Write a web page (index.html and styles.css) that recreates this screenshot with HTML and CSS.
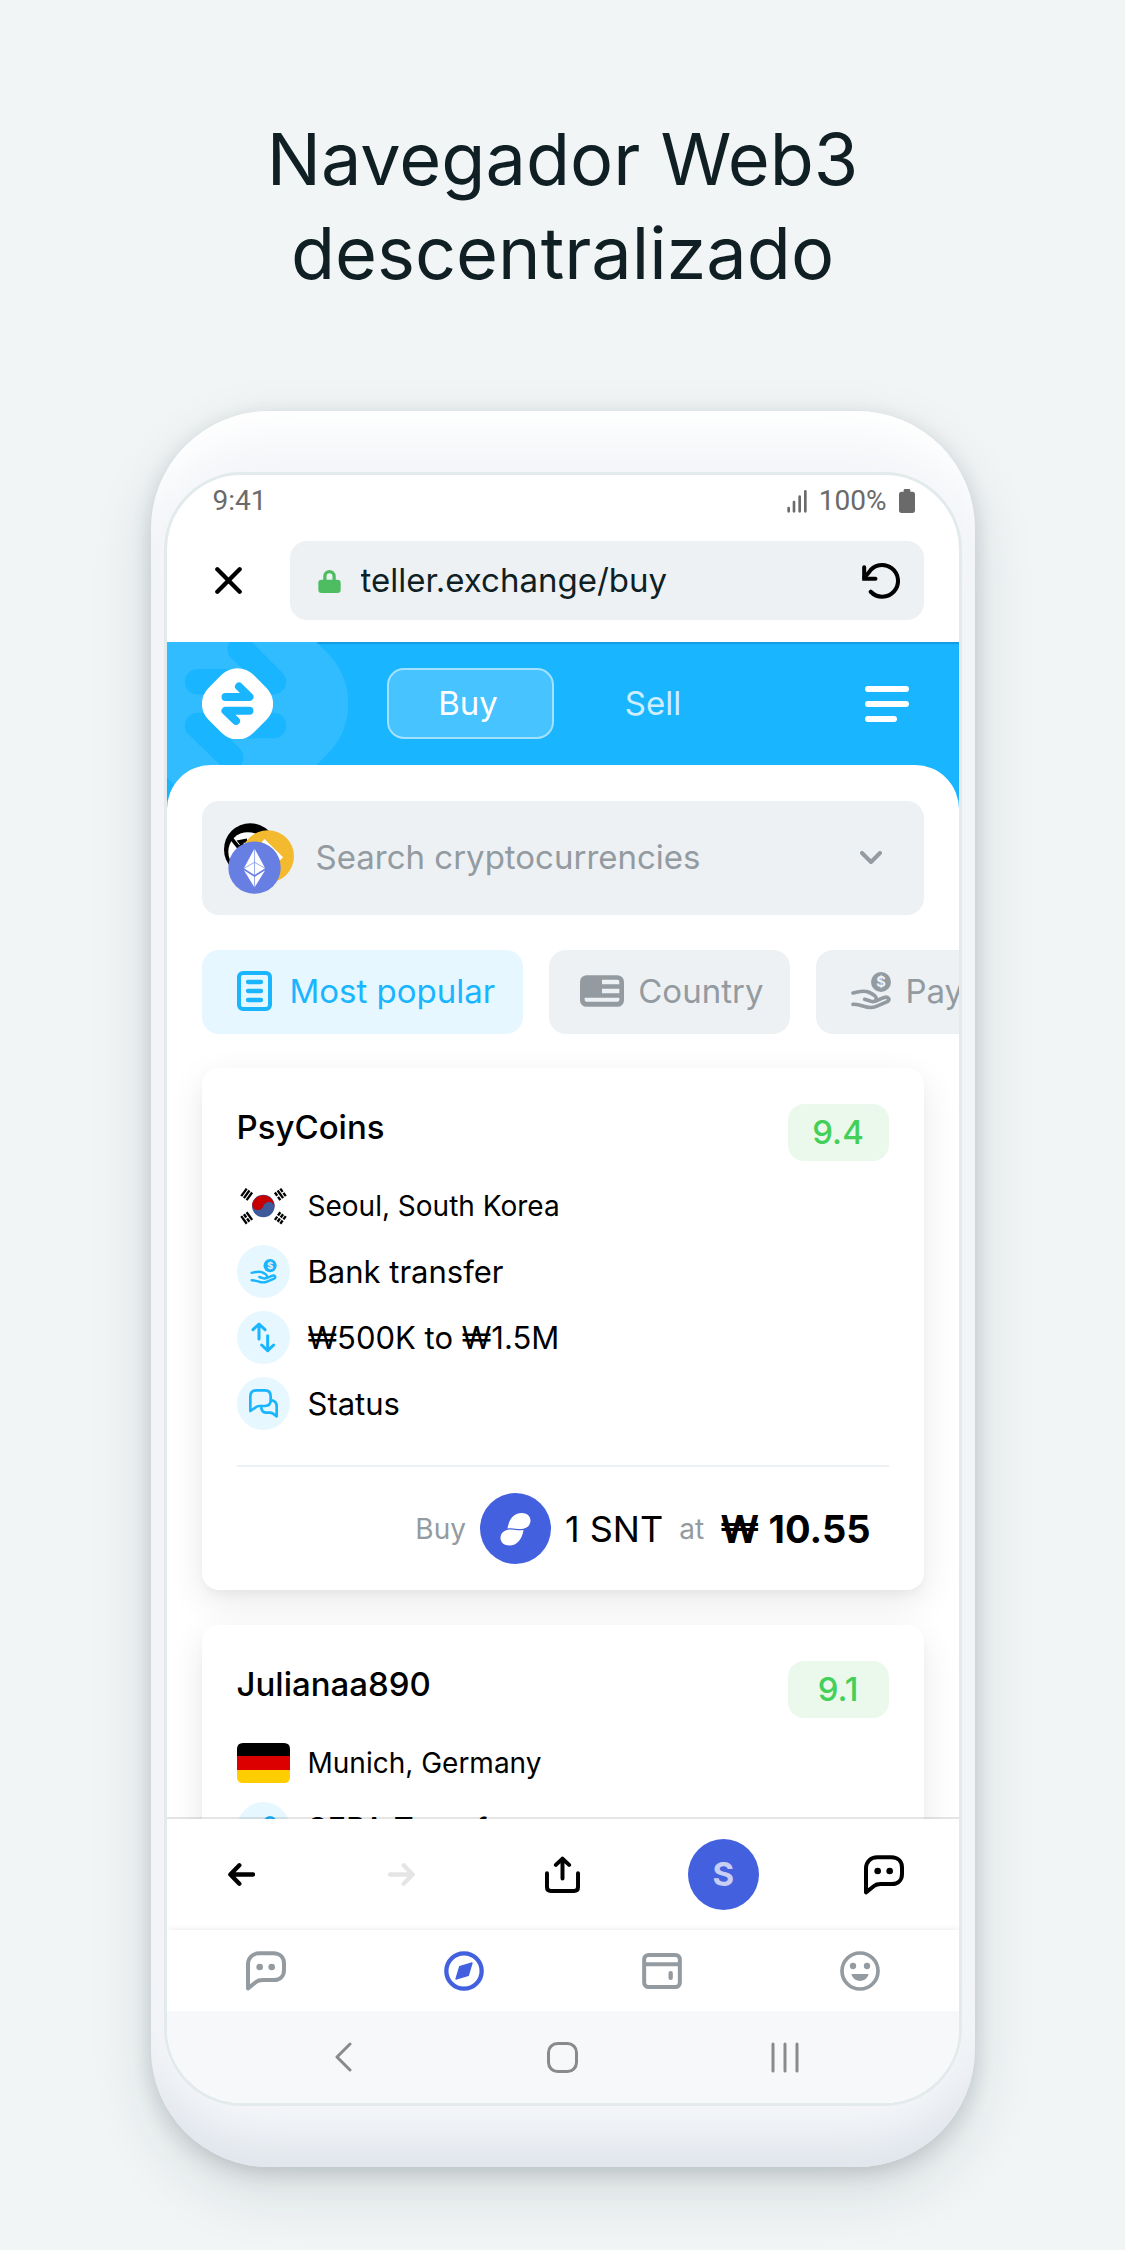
FILE: index.html
```html
<!DOCTYPE html>
<html lang="es">
<head>
<meta charset="utf-8">
<meta name="viewport" content="width=device-width, initial-scale=1">
<title>Navegador Web3 descentralizado</title>
<link rel="stylesheet" href="styles.css">
</head>
<body>
<svg class="sprite" aria-hidden="true">
  <symbol id="hand" viewBox="0 0 120 114">
    <circle cx="90" cy="30" r="30" fill="currentColor"/>
    <g fill="none" stroke="currentColor" stroke-width="11" stroke-linecap="round" stroke-linejoin="round">
      <path d="M6 63C22 60 36 54 52 60C64 65 76 72 76 80C76 88 68 90 60 88L41 82"/>
      <path d="M74 87L98 77C112 72 119 83 109 89L76 103C62 109 50 107 38 103C26 99 18 96 6 97"/>
    </g>
    <text class="coin-sign" x="90" y="45" text-anchor="middle">$</text>
  </symbol>
  <symbol id="chat" viewBox="0 0 120 120">
    <path d="M6 112V40C6 20 20 7 40 7H82C102 7 114 20 114 38V57C114 75 102 87 84 87H50C42 87 36 88 30 93Z" fill="none" stroke="currentColor" stroke-width="12" stroke-linejoin="round"/>
    <circle cx="41" cy="48" r="10" fill="currentColor"/><circle cx="77" cy="48" r="10" fill="currentColor"/>
  </symbol>
  <symbol id="arrow-left" viewBox="0 0 81 69">
    <path d="M75 34.500H8M34 7L7 34.500L34 62" fill="none" stroke="currentColor" stroke-width="13" stroke-linecap="round" stroke-linejoin="round"/>
  </symbol>
</svg>

<main class="promo">
  <h1 class="headline">Navegador Web3<br>descentralizado</h1>

  <div class="phone">
    <div class="screen">
      <div class="status-bar">
        <span>9:41</span>
        <span class="status-right">
          <svg width="20" height="24" viewBox="0 0 60 72" aria-hidden="true"><path d="M5 57V67M21 39V67M38 23V67M55 7V67" stroke="#6a6a6a" stroke-width="8" stroke-linecap="round"/></svg>
          <span>100%</span>
          <svg width="16" height="24" viewBox="0 0 48 72" aria-hidden="true"><path d="M14 8V4Q14 0 18 0H30Q34 0 34 4V8H40Q48 8 48 16V64Q48 72 40 72H8Q0 72 0 64V16Q0 8 8 8Z" fill="#6a6a6a"/></svg>
        </span>
      </div>

      <div class="address-row">
        <button class="icon-button close" aria-label="Close"><svg width="27" height="27" viewBox="0 0 81 81"><path d="M7 7L74 74M74 7L7 74" stroke="currentColor" stroke-width="13" stroke-linecap="round"/></svg></button>
        <div class="address">
          <svg width="23" height="24" viewBox="0 0 68 73" aria-hidden="true"><rect y="33" width="68" height="40" rx="10" fill="#4ebc60"/><path d="M20 40V22A14 14 0 0 1 48 22V40" fill="none" stroke="#4ebc60" stroke-width="10"/></svg>
          <input class="address-input" type="text" value="teller.exchange/buy" aria-label="Address">
          <button class="icon-button" aria-label="Reload"><svg width="38" height="36" viewBox="0 0 113 106"><path d="M26 85A47 47 0 1 0 20 28L7 43" fill="none" stroke="currentColor" stroke-width="12" stroke-linecap="round"/><path d="M6.500 12V46H40" fill="none" stroke="currentColor" stroke-width="12" stroke-linecap="round"/></svg></button>
        </div>
      </div>

      <div class="dapp">
        <svg class="dapp-pattern" viewBox="0 0 211 213" aria-hidden="true">
          <rect x="11" y="12" width="189" height="189" rx="67" transform="rotate(45 105.500 106.500)" fill="#30bcff"/>
          <path d="M110 55L141 86H70M101 157L70 127H141" fill="none" stroke="#19b5ff" stroke-width="24" stroke-linecap="round" stroke-linejoin="round"/>
        </svg>
        <header class="dapp-header">
          <svg class="dapp-logo" viewBox="0 0 211 213" role="img" aria-label="Teller">
            <rect x="11" y="12" width="189" height="189" rx="67" transform="rotate(45 105.500 106.500)" fill="#fff"/>
            <path d="M110 55L141 86H70M101 157L70 127H141" fill="none" stroke="#19b5ff" stroke-width="24" stroke-linecap="round" stroke-linejoin="round"/>
          </svg>
          <nav class="switch">
            <button class="switch-item active">Buy</button>
            <button class="switch-item">Sell</button>
          </nav>
          <button class="icon-button menu" aria-label="Menu"><svg width="44" height="36" viewBox="0 0 44 36"><path d="M3 3H41M3 18H41M3 33H29" stroke="#fff" stroke-width="6" stroke-linecap="round"/></svg></button>
        </header>

        <div class="dapp-body">
          <div class="search">
            <svg width="70" height="71" viewBox="0 0 211 213" aria-hidden="true">
              <circle cx="79" cy="79" r="79"/><circle cx="72" cy="86" r="59" fill="#fff"/>
              <path d="M24 48L45 74L56 66L48 56L70 52" fill="none" stroke="#000" stroke-width="11"/>
              <circle cx="132" cy="100" r="79" fill="#f3ba2f"/><path d="M114 57L122 48L178 103L169 112Z" fill="#fff"/>
              <circle cx="92" cy="134" r="79" fill="#677fe3"/>
              <path d="M92 76L60 136L92 156L124 136Z" fill="#fff"/><path d="M60 142L92 194L124 142L92 162Z" fill="#fff"/>
              <path d="M92 76V194M60 136L92 118L124 136" fill="none" stroke="#677fe3" stroke-width="2"/>
            </svg>
            <input class="search-input" type="text" placeholder="Search cryptocurrencies" aria-label="Search cryptocurrencies">
            <button class="icon-button" aria-label="Open list"><svg width="22" height="14" viewBox="0 0 22 14"><path d="M2 2L11 11L20 2" fill="none" stroke="#939ba1" stroke-width="4" stroke-linecap="round" stroke-linejoin="round"/></svg></button>
          </div>

          <div class="chips">
            <button class="chip active">
              <svg width="35" height="40" viewBox="0 0 105 120" aria-hidden="true"><rect x="6" y="6" width="93" height="108" rx="12" fill="none" stroke="currentColor" stroke-width="12"/><path d="M33 33H72M33 60H72M33 87H72" stroke="currentColor" stroke-width="13" stroke-linecap="round"/></svg>
              Most popular
            </button>
            <button class="chip country">
              <svg width="44" height="32" viewBox="0 0 132 95" aria-hidden="true"><rect width="132" height="95" rx="20" fill="currentColor"/><path d="M66 14H112Q118 14 118 20V27H66ZM66 41H118V54H66ZM14 68H118V74Q118 80 112 80H20Q14 80 14 74Z" fill="#edf1f4"/></svg>
              Country
            </button>
            <button class="chip payment">
              <svg width="40" height="38" aria-hidden="true"><use href="#hand"/></svg>
              Payment
            </button>
          </div>

          <article class="card">
            <div class="card-head"><h2 class="card-title">PsyCoins</h2><span class="score">9.4</span></div>
            <ul class="facts">
              <li class="fact place">
                <svg width="53" height="40" viewBox="0 0 159 120" role="img" aria-label="South Korea">
                  <circle cx="79" cy="60" r="34" fill="#3e5a9a"/>
                  <path d="M46 52A34 34 0 0 1 112 68A17 17 0 0 0 79 60A17 17 0 0 1 46 52Z" fill="#c60000"/>
                  <path d="M46 52A34 34 0 0 0 46 68" fill="none"/>
                  <g stroke="#000" stroke-width="7">
                    <path transform="translate(29 25) rotate(-54)" d="M-14 -10H14M-14 0H14M-14 10H14"/>
                    <path transform="translate(130 25) rotate(54)" d="M-14 -10H-2M2 -10H14M-14 0H14M-14 10H-2M2 10H14"/>
                    <path transform="translate(29 96) rotate(54)" d="M-14 -10H14M-14 0H-2M2 0H14M-14 10H14"/>
                    <path transform="translate(130 96) rotate(-54)" d="M-14 -10H-2M2 -10H14M-14 0H-2M2 0H14M-14 10H-2M2 10H14"/>
                  </g>
                </svg>
                Seoul, South Korea
              </li>
              <li class="fact"><span class="disc"><svg width="27" height="25" aria-hidden="true"><use href="#hand"/></svg></span>Bank transfer</li>
              <li class="fact"><span class="disc"><svg width="53" height="53" viewBox="0 0 159 159" aria-hidden="true"><path d="M66 84V40M48 56L66 39L84 56M92 74V119M74 102L92 119L110 102" fill="none" stroke="currentColor" stroke-width="9" stroke-linecap="round" stroke-linejoin="round"/></svg></span>₩500K to ₩1.5M</li>
              <li class="fact"><span class="disc"><svg width="53" height="53" viewBox="0 0 159 159" aria-hidden="true"><path d="M40 102V58Q40 40 58 40H84Q101 40 101 58V70Q101 87 84 87H68Q60 87 55 92ZM105 70Q119 73 119 88V118L108 110Q104 107 98 107H88Q75 107 73 93" fill="none" stroke="currentColor" stroke-width="8" stroke-linecap="round" stroke-linejoin="round"/></svg></span>Status</li>
            </ul>
            <div class="deal">
              <span class="muted">Buy</span>
              <svg width="71" height="71" viewBox="0 0 71 71" aria-hidden="true"><circle cx="35.500" cy="35.500" r="35.500" fill="#4360df"/><path id="snt" d="M27.500 35.500C29 26 34 20 41.500 20C47 20 50.500 23 50.500 27.500C50.500 33 46 36 40 36C36 36 32 34.500 27.500 35.500Z" fill="#fff"/><use href="#snt" transform="rotate(180 35.500 36.200)"/></svg>
              <span class="amount">1 SNT</span>
              <span class="muted at">at</span>
              <strong class="price">₩ 10.55</strong>
            </div>
          </article>

          <article class="card">
            <div class="card-head"><h2 class="card-title">Julianaa890</h2><span class="score">9.1</span></div>
            <ul class="facts">
              <li class="fact place"><svg width="53" height="40" viewBox="0 0 53 40" role="img" aria-label="Germany"><path d="M0 14V6Q0 0 6 0H47Q53 0 53 6V14Z"/><path d="M0 13H53V27H0Z" fill="#d00"/><path d="M0 27V34Q0 40 6 40H47Q53 40 53 34V27Z" fill="#ffce00"/></svg>Munich, Germany</li>
              <li class="fact"><span class="disc"><svg width="27" height="25" aria-hidden="true"><use href="#hand"/></svg></span>SEPA Transfer</li>
            </ul>
          </article>
        </div>
      </div>

      <div class="toolbar">
        <button class="tool" aria-label="Back"><svg width="27" height="23" aria-hidden="true"><use href="#arrow-left"/></svg></button>
        <button class="tool forward" aria-label="Forward" disabled><svg width="27" height="23" aria-hidden="true"><use href="#arrow-left"/></svg></button>
        <button class="tool" aria-label="Share"><svg width="35" height="37" viewBox="0 0 106 112"><path d="M6 52V94Q6 106 18 106H88Q100 106 100 94V52M53 68V8M33 27L53 8L73 27" fill="none" stroke="currentColor" stroke-width="12" stroke-linecap="round" stroke-linejoin="round"/></svg></button>
        <button class="tool"><span class="avatar">S</span></button>
        <button class="tool" aria-label="Chat"><svg width="40" height="40" aria-hidden="true"><use href="#chat"/></svg></button>
      </div>

      <nav class="tabs">
        <a class="tab" href="#chats" aria-label="Chats"><svg width="40" height="40" aria-hidden="true"><use href="#chat"/></svg></a>
        <a class="tab current" href="#browser" aria-label="Browser"><svg width="40" height="40" viewBox="0 0 120 120"><circle cx="60" cy="60" r="53" fill="none" stroke="currentColor" stroke-width="13"/><path d="M84 36L73 73L36 84L47 47Z" fill="currentColor" stroke="currentColor" stroke-width="4" stroke-linejoin="round"/></svg></a>
        <a class="tab" href="#wallet" aria-label="Wallet"><svg width="40" height="36" viewBox="0 0 119 108"><rect x="6" y="6" width="107" height="96" rx="13" fill="none" stroke="currentColor" stroke-width="12"/><path d="M6 34H113" stroke="currentColor" stroke-width="12"/><rect x="79" y="54" width="13" height="27" rx="6" fill="currentColor"/></svg></a>
        <a class="tab" href="#profile" aria-label="Profile"><svg width="40" height="40" viewBox="0 0 120 120"><circle cx="60" cy="60" r="54" fill="none" stroke="currentColor" stroke-width="11"/><circle cx="39" cy="45" r="9.500" fill="currentColor"/><circle cx="81" cy="45" r="9.500" fill="currentColor"/><path d="M37 69H83Q87 69 85 73Q77 90 60 90Q43 90 35 73Q33 69 37 69Z" fill="currentColor"/></svg></a>
      </nav>

      <div class="system-nav">
        <button class="icon-button" aria-label="System back"><svg width="31" height="31" viewBox="0 0 31 31"><path d="M25 2L12 15L25 28" fill="none" stroke="currentColor" stroke-width="3" stroke-linecap="round" stroke-linejoin="round"/></svg></button>
        <button class="icon-button" aria-label="Home"><svg width="31" height="31" viewBox="0 0 31 31"><rect x="1.500" y="1.500" width="28" height="28" rx="9" fill="none" stroke="currentColor" stroke-width="3"/></svg></button>
        <button class="icon-button" aria-label="Recent apps"><svg width="31" height="31" viewBox="0 0 31 31"><path d="M3 2V29M15 2V29M27 2V29" stroke="currentColor" stroke-width="3" stroke-linecap="round"/></svg></button>
      </div>
    </div>
  </div>
</main>
</body>
</html>
```

FILE: styles.css
```css
* {
  box-sizing: border-box;
}

body {
  margin: 0;
  background: #f1f5f6;
  color: #000;
  font-family: Inter, "Liberation Sans", sans-serif;
  font-size: 33px;
}

button,
input {
  font: inherit;
  color: inherit;
  border: 0;
  padding: 0;
  margin: 0;
  background: none;
}

svg {
  display: block;
  flex: none;
}

.sprite {
  position: absolute;
  width: 0;
  height: 0;
}

.promo {
  display: flex;
  flex-direction: column;
  align-items: center;
  gap: 111px;
  min-height: 100vh;
  padding: 112px 24px 83px;
}

.headline {
  margin: 0;
  color: #0f1f24;
  font-size: 72px;
  line-height: 94px;
  font-weight: 400;
  text-align: center;
}

.phone {
  width: 100%;
  max-width: 824px;
  padding: 61px 13px;
  border-radius: 118px;
  background: #f4f6f9;
  box-shadow:
    inset 0 44px 44px -20px #fff,
    inset 0 -44px 44px -16px #e0e5eb,
    0 6px 20px rgba(20, 35, 45, 0.16),
    0 24px 64px rgba(20, 35, 45, 0.12);
}

.screen {
  overflow: hidden;
  border: 3px solid #e2eaeb;
  border-radius: 78px;
  background: #fff;
}

.status-bar {
  display: flex;
  align-items: center;
  justify-content: space-between;
  height: 51px;
  padding: 0 44px 0 46px;
  color: #6a6a6a;
  font-family: Roboto, sans-serif;
  font-size: 28px;
  line-height: 32px;
}

.status-right {
  display: flex;
  align-items: center;
  gap: 12px;
}

.icon-button {
  display: grid;
  place-items: center;
  flex: none;
}

.address-row {
  display: flex;
  align-items: center;
  gap: 48px;
  padding: 15px 35px 22px 48px;
}

.address {
  display: flex;
  flex: 1;
  align-items: center;
  min-width: 0;
  height: 79px;
  padding: 0 24px 0 28px;
  border-radius: 17px;
  background: #edf1f4;
}

.address-input {
  flex: 1;
  min-width: 0;
  height: 44px;
  margin-left: 20px;
  padding-bottom: 2px;
  color: #0f1f24;
}

.dapp {
  position: relative;
  height: 1177px;
  overflow: hidden;
  background: #19b5ff;
  box-shadow: inset 0 2px 1px rgba(0, 60, 110, 0.2);
}

.dapp-pattern {
  position: absolute;
  left: -44px;
  top: -52px;
  width: 225px;
}

.dapp-header {
  position: relative;
  display: flex;
  align-items: center;
  height: 123px;
  padding: 0 50px 0 35px;
}

.dapp-logo {
  width: 71px;
}

.switch {
  display: flex;
  flex: 1;
  gap: 18px;
  margin-left: 114px;
}

.switch-item {
  width: 167px;
  height: 71px;
  padding: 0 4px 2px 0;
  border: 2px solid transparent;
  border-radius: 17px;
  color: rgba(255, 255, 255, 0.8);
  line-height: 44px;
}

.switch-item.active {
  border-color: rgba(255, 255, 255, 0.5);
  background: rgba(255, 255, 255, 0.2);
  color: #fff;
}

.dapp-body {
  position: relative;
  padding: 36px 35px 0;
  border-radius: 44px 44px 0 0;
  background: #fff;
}

.search {
  display: flex;
  align-items: center;
  height: 114px;
  padding: 0 42px 0 22px;
  border-radius: 17px;
  background: #edf1f4;
}

.search-input {
  flex: 1;
  min-width: 0;
  height: 44px;
  margin-left: 22px;
  padding-bottom: 2px;
}

.search-input::placeholder {
  color: #939ba1;
  opacity: 1;
}

.chips {
  display: flex;
  gap: 26px;
  margin: 35px -35px 34px 0;
  overflow: hidden;
}

.chip {
  display: flex;
  flex: none;
  align-items: center;
  gap: 18px;
  height: 84px;
  padding: 0 28px 2px 35px;
  border-radius: 17px;
  background: #edf1f4;
  color: #939ba1;
  line-height: 44px;
  white-space: nowrap;
}

.chip.country {
  gap: 14px;
  padding-left: 31px;
  padding-right: 27px;
}

.chip.payment {
  gap: 14px;
}

.chip.active {
  background: #e7f7ff;
  color: #19b5ff;
}

.coin-sign {
  fill: #edf1f4;
  font-size: 44px;
  font-weight: 700;
}

.card {
  margin-bottom: 35px;
  padding: 36px 35px 26px;
  border-radius: 17px;
  background: #fff;
  box-shadow: 0 12px 36px rgba(0, 15, 30, 0.09), 0 6px 10px -2px rgba(0, 15, 30, 0.04);
}

.card-head {
  display: flex;
  align-items: flex-start;
  justify-content: space-between;
}

.card-title {
  margin: 0;
  font-size: 33px;
  line-height: 47px;
  font-weight: 500;
}

.score {
  width: 101px;
  border-radius: 16px;
  background: #ebf9ed;
  color: #44d058;
  font-weight: 500;
  line-height: 57px;
  text-align: center;
}

.facts {
  display: grid;
  gap: 13px;
  margin: 18px 0 35px;
  padding: 0;
  list-style: none;
}

.fact {
  display: flex;
  align-items: center;
  gap: 18px;
  height: 53px;
  font-size: 31px;
}

.fact.place {
  font-size: 28px;
}

.disc {
  display: grid;
  place-items: center;
  width: 53px;
  height: 53px;
  border-radius: 50%;
  background: #e7f7ff;
  color: #19b5ff;
}

.deal {
  display: flex;
  align-items: center;
  justify-content: flex-end;
  gap: 14px;
  padding: 26px 18px 0 0;
  border-top: 2px solid #edf1f4;
}

.muted {
  color: #939ba1;
  font-size: 28px;
}

.muted.at {
  margin: 0 2px;
}

.amount {
  font-size: 36px;
}

.price {
  font-size: 38px;
  font-weight: 700;
}

.toolbar {
  position: relative;
  display: flex;
  align-items: center;
  justify-content: space-between;
  height: 113px;
  margin-top: -2px;
  padding: 0 35px;
  border-top: 2px solid rgba(0, 0, 0, 0.1);
  background: #fff;
  background-clip: padding-box;
}

.tool {
  display: grid;
  place-items: center;
  width: 79px;
  height: 79px;
}

.forward {
  color: #e5e5e5;
  transform: scaleX(-1);
}

.avatar {
  width: 71px;
  border-radius: 50%;
  background: #4360df;
  color: #c7cff5;
  font-weight: 700;
  line-height: 71px;
}

.tabs {
  position: relative;
  display: grid;
  grid-template-columns: repeat(4, 1fr);
  height: 81px;
  background: #fff;
  box-shadow: 0 0 6px rgba(0, 15, 30, 0.1);
}

.tab {
  display: grid;
  place-items: center;
  color: #939ba1;
}

.tab.current {
  color: #4360df;
}

.system-nav {
  position: relative;
  display: flex;
  justify-content: space-between;
  height: 92px;
  padding: 0 158px;
  background: #f6f8fa;
  color: #8a8a8a;
}
```
